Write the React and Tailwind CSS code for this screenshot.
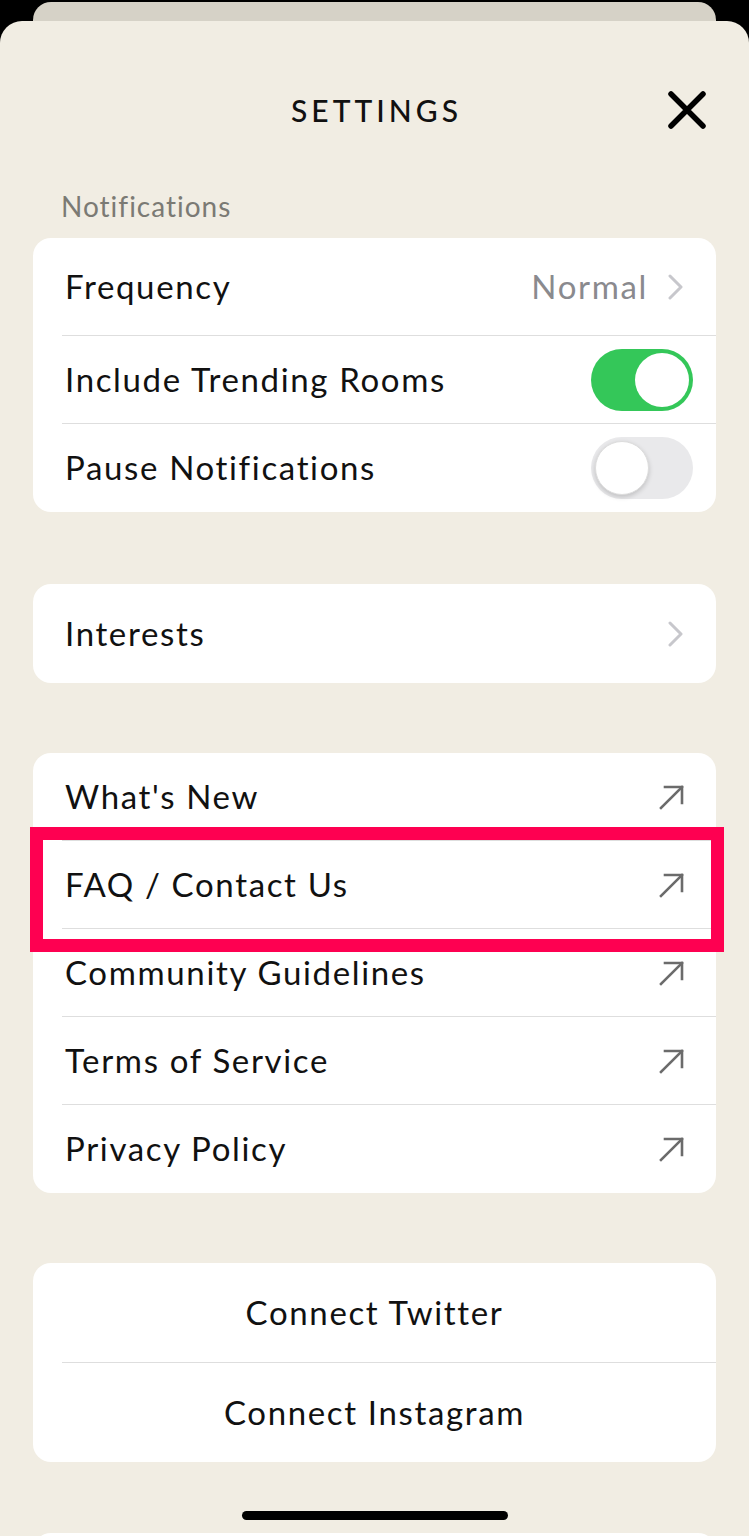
export default function App() {
  return (
    <div className="w-[749px] min-h-[1536px] bg-black overflow-hidden font-['Lato',sans-serif]">
      {/* card behind the sheet */}
      <div className="mx-[33px] mt-[2px] h-[19px] rounded-t-[18px] bg-[#d6d2c7]" />

      <div className="bg-[#f1ede3] rounded-t-[22px] px-[33px] min-h-[1515px] flex flex-col">
        <header className="mt-[59px] h-[60px] flex items-center">
          <div className="w-[48px]" />
          <h1 className="flex-1 text-center text-[30px] font-medium tracking-[4px] pl-[4px] text-[#111]">SETTINGS</h1>
          <button className="w-[48px] h-[48px] flex items-center">
            <CloseIcon />
          </button>
        </header>

        <div className="mt-[49px] pl-[28px] text-[28px] tracking-[1px] leading-[34px] text-[#7b7a74]">Notifications</div>

        <section className="mt-[15px] bg-white rounded-[18px]">
          <Row height="h-[98px]">
            <span className="flex-1">Frequency</span>
            <span className="text-[#8a8a8e] mr-[20px]">Normal</span>
            <Chevron />
          </Row>
          <Row toggle>
            <span className="flex-1">Include Trending Rooms</span>
            <Toggle on />
          </Row>
          <Row toggle last>
            <span className="flex-1">Pause Notifications</span>
            <Toggle />
          </Row>
        </section>

        <section className="mt-[72px] bg-white rounded-[18px]">
          <Row height="h-[99px]" last>
            <span className="flex-1">Interests</span>
            <Chevron />
          </Row>
        </section>

        <section className="relative mt-[70px] bg-white rounded-[18px]">
          <LinkRow label="What's New" />
          <LinkRow label="FAQ / Contact Us" />
          <LinkRow label="Community Guidelines" />
          <LinkRow label="Terms of Service" />
          <LinkRow label="Privacy Policy" last />
          {/* highlight box */}
          <div className="absolute left-[-3px] top-[74px] w-[694px] h-[125px] border-[13px] border-[#fe0051]" />
        </section>

        <section className="mt-[70px] bg-white rounded-[18px] text-[33px] tracking-[0.05em] text-[#111]">
          <div className="h-[99px] flex items-center justify-center">Connect Twitter</div>
          <div className="ml-[29px] border-t border-[#dedede]" />
          <div className="h-[99px] flex items-center justify-center">Connect Instagram</div>
        </section>

        <div className="mt-[49px] mx-auto w-[266px] h-[9px] rounded-full bg-black" />
        <div className="mt-[13px] h-[20px] bg-white rounded-t-[18px]" />
      </div>
    </div>
  )
}

function Row({ children, height = 'h-[88px]', toggle, last }) {
  return (
    <div className="pl-[29px]">
      <div className={`${height} flex items-center text-[33px] tracking-[0.05em] text-[#111] pl-[3px] ${toggle ? 'pr-[23px]' : 'pr-[33px]'} ${last ? '' : 'border-b border-[#dedede]'}`}>
        {children}
      </div>
    </div>
  )
}

function LinkRow({ label, last }) {
  return (
    <div className="pl-[29px]">
      <div className={`h-[88px] flex items-center text-[33px] tracking-[0.05em] text-[#111] pl-[3px] pr-[31px] ${last ? '' : 'border-b border-[#dedede]'}`}>
        <span className="flex-1">{label}</span>
        <svg width="26" height="26" viewBox="0 0 26 26" fill="none" stroke="#6b6b6b" strokeWidth="2.6" strokeLinecap="square">
          <path d="M2 24 L23 3" />
          <path d="M6 3 H23 V19" />
        </svg>
      </div>
    </div>
  )
}

function Chevron() {
  return (
    <svg width="15" height="26" viewBox="0 0 15 26" fill="none" stroke="#c7c7cc" strokeWidth="3" strokeLinecap="round" strokeLinejoin="round">
      <path d="M2 2 L13 13 L2 24" />
    </svg>
  )
}

function CloseIcon() {
  return (
    <svg width="38" height="38" viewBox="0 0 38 38" fill="none" stroke="#000" strokeWidth="5.5" strokeLinecap="round">
      <path d="M3 3 L35 35 M35 3 L3 35" />
    </svg>
  )
}

function Toggle({ on }) {
  return (
    <div className={`w-[102px] h-[62px] rounded-full p-[4px] flex items-center ${on ? 'bg-[#34c759] justify-end' : 'bg-[#e9e9eb] justify-start'}`}>
      <div className={`w-[54px] h-[54px] rounded-full bg-white ${on ? '' : 'shadow-[0_2px_5px_rgba(0,0,0,0.18)] border border-[#ddd]'}`} />
    </div>
  )
}
